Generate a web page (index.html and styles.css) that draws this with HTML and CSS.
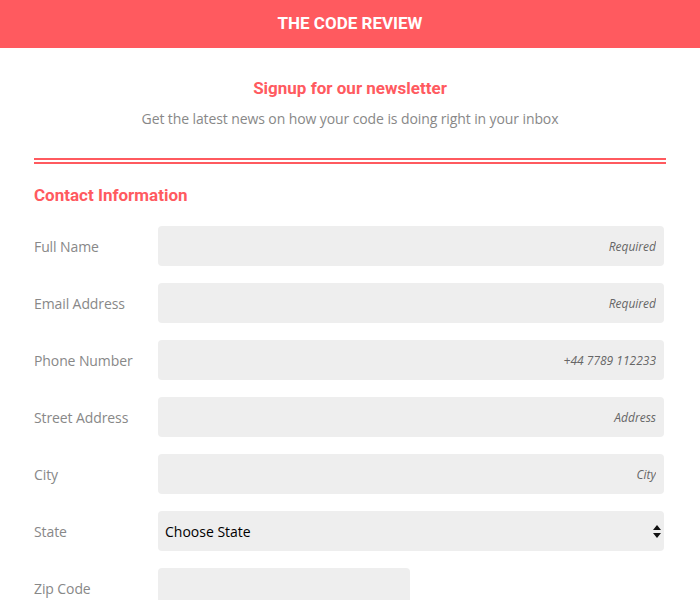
FILE: index.html
```html
<!DOCTYPE html>
<html>
<head>
<meta charset="utf-8">
<link rel="stylesheet" href="styles.css">
</head>
<body>
<header class="topbar">THE CODE REVIEW</header>
<main class="wrap">
  <section class="intro">
    <h2 class="intro-title">Signup for our newsletter</h2>
    <p class="intro-text">Get the latest news on how your code is doing right in your inbox</p>
  </section>
  <div class="divider"></div>
  <h3 class="section-title">Contact Information</h3>
  <form class="form">
    <div class="row"><label class="label">Full Name</label><input class="field" placeholder="Required"></div>
    <div class="row"><label class="label">Email Address</label><input class="field" placeholder="Required"></div>
    <div class="row"><label class="label">Phone Number</label><input class="field" placeholder="+44 7789 112233"></div>
    <div class="row"><label class="label">Street Address</label><input class="field" placeholder="Address"></div>
    <div class="row"><label class="label">City</label><input class="field" placeholder="City"></div>
    <div class="row"><label class="label">State</label>
      <div class="select-wrap">
        <select class="field select"><option>Choose State</option></select>
        <svg class="arrows" width="8" height="13" viewBox="0 0 8 13"><path d="M4 0 L8 5 L0 5 Z M0 8 L8 8 L4 13 Z" fill="#111"/></svg>
      </div>
    </div>
    <div class="row"><label class="label">Zip Code</label><input class="field zip"></div>
  </form>
</main>
</body>
</html>
```
FILE: styles.css
```css
* { box-sizing: border-box; }
body { margin: 0; background: #fff; font-family: "Open Sans", sans-serif; }
.topbar {
  height: 48px;
  background: #ff5a5f;
  color: #fff;
  font-family: Roboto, sans-serif;
  font-weight: 700;
  font-size: 17px;
  display: flex;
  align-items: center;
  justify-content: center;
  padding-bottom: 2px;
}
.wrap { margin: 0 34px; }
.intro { text-align: center; padding-top: 29px; }
.intro-title {
  margin: 0;
  font-family: Roboto, sans-serif;
  font-weight: 700;
  font-size: 17px;
  line-height: 22px;
  color: #ff5a5f;
}
.intro-text {
  margin: 10px 0 0;
  font-size: 14px;
  letter-spacing: -0.1px;
  line-height: 20px;
  color: #888;
}
.divider {
  margin-top: 29px;
  height: 6px;
  border-top: 2px solid #ff5a5f;
  border-bottom: 2px solid #ff5a5f;
}
.section-title {
  margin: 21px 0 0;
  font-family: Roboto, sans-serif;
  font-weight: 700;
  font-size: 17px;
  line-height: 20px;
  color: #ff5a5f;
}
.form { display: flex; flex-direction: column; gap: 17px; margin-top: 21px; padding-right: 2px; }
.row { display: grid; grid-template-columns: 124px 1fr; align-items: center; }
.label { font-size: 14px; letter-spacing: -0.1px; color: #888; }
.field {
  height: 40px;
  border: none;
  border-radius: 4px;
  background: #eee;
  font-family: "Open Sans", sans-serif;
  font-size: 12px;
  font-style: italic;
  text-align: right;
  padding: 0 8px;
  width: 100%;
  outline: none;
}
.field::placeholder { color: #666; }
.select-wrap { position: relative; }
.select {
  appearance: none;
  -webkit-appearance: none;
  text-align: left;
  font-style: normal;
  font-size: 14px;
  color: #000;
  padding: 0 7px;
}
.arrows { position: absolute; right: 3px; top: 14px; }
.zip { width: 252px; }
```
